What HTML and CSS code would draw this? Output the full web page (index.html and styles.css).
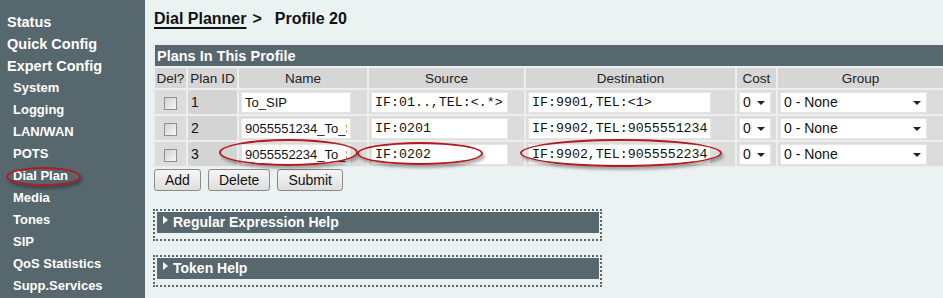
FILE: index.html
```html
<!DOCTYPE HTML>
<html>
<head>
    <title>Dial Planner</title>
    <link rel="stylesheet" href="styles.css">
</head>
<body>
    <div class="page">
        <div class="nav">
            <a class="top" href="#">Status</a>
            <a class="top" href="#">Quick Config</a>
            <a class="top" href="#">Expert Config</a>
            <a class="sub" href="#">System</a>
            <a class="sub" href="#">Logging</a>
            <a class="sub" href="#">LAN/WAN</a>
            <a class="sub" href="#">POTS</a>
            <a class="sub" href="#">Dial Plan</a>
            <a class="sub" href="#">Media</a>
            <a class="sub" href="#">Tones</a>
            <a class="sub" href="#">SIP</a>
            <a class="sub" href="#">QoS Statistics</a>
            <a class="sub" href="#">Supp.Services</a>
        </div>
        <div class="main">
            <h1 class="crumbs"><a href="#">Dial Planner</a><span class="sep">&gt;</span>Profile 20</h1>
            <table class="plans">
                <colgroup>
                    <col class="c-del"><col class="c-id"><col class="c-name"><col class="c-src">
                    <col class="c-dst"><col class="c-cost"><col class="c-group">
                </colgroup>
                <tr><th class="title" colspan="7">Plans In This Profile</th></tr>
                <tr class="head">
                    <td>Del?</td><td>Plan ID</td><td>Name</td><td>Source</td>
                    <td>Destination</td><td>Cost</td><td>Group</td>
                </tr>
                <tr class="row">
                    <td class="del"><input type="checkbox"></td>
                    <td class="id">1</td>
                    <td><input class="text name" type="text" value="To_SIP"></td>
                    <td><input class="text mono src" type="text" value="IF:01..,TEL:&lt;.*&gt;"></td>
                    <td><input class="text mono dst" type="text" value="IF:9901,TEL:&lt;1&gt;"></td>
                    <td><span class="pick cost"><select><option>0</option></select></span></td>
                    <td><span class="pick group"><select><option>0 - None</option></select></span></td>
                </tr>
                <tr class="row">
                    <td class="del"><input type="checkbox"></td>
                    <td class="id">2</td>
                    <td><input class="text name" type="text" value="9055551234_To_SIP"></td>
                    <td><input class="text mono src" type="text" value="IF:0201"></td>
                    <td><input class="text mono dst" type="text" value="IF:9902,TEL:9055551234"></td>
                    <td><span class="pick cost"><select><option>0</option></select></span></td>
                    <td><span class="pick group"><select><option>0 - None</option></select></span></td>
                </tr>
                <tr class="row">
                    <td class="del"><input type="checkbox"></td>
                    <td class="id">3</td>
                    <td><input class="text name" type="text" value="9055552234_To_SIP"></td>
                    <td><input class="text mono src" type="text" value="IF:0202"></td>
                    <td><input class="text mono dst" type="text" value="IF:9902,TEL:9055552234"></td>
                    <td><span class="pick cost"><select><option>0</option></select></span></td>
                    <td><span class="pick group"><select><option>0 - None</option></select></span></td>
                </tr>
            </table>
            <div class="actions">
                <button>Add</button>
                <button>Delete</button>
                <button>Submit</button>
            </div>
            <div class="help">
                <div class="help-bar"><span class="arrow"></span>Regular Expression Help</div>
            </div>
            <div class="help second">
                <div class="help-bar"><span class="arrow"></span>Token Help</div>
            </div>
        </div>
    </div>

    <!-- red marks drawn over the screenshot -->
    <div class="mark mark-nav"></div>
    <div class="mark mark-name"></div>
    <div class="mark mark-src"></div>
    <div class="mark mark-dst"></div>
</body>
</html>
```

FILE: styles.css
```css
body
{
    margin: 0;
    background: #ebf3f2;
    font-family: "Liberation Sans", Arial, sans-serif;
    color: #111;
    overflow: hidden;
    position: relative;
}

div.page
{
    display: flex;
    min-height: 298px;
}

div.nav
{
    width: 145px;
    flex: none;
    box-sizing: border-box;
    padding-top: 11px;
    background: #56676e;
}

div.nav a
{
    display: block;
    color: #fff;
    font-weight: bold;
    text-decoration: none;
    line-height: 22px;
}

div.nav a.top { font-size: 14.5px; padding-left: 7px; }
div.nav a.sub { font-size: 13px; padding-left: 13px; }

div.main
{
    flex: 1;
    padding-left: 8px;
}

h1.crumbs
{
    margin: 9px 0 0 1px;
    font-size: 16px;
    line-height: 20px;
}

h1.crumbs a
{
    color: #111;
    text-decoration: underline;
    text-decoration-thickness: 2px;
    text-underline-offset: 3px;
}

h1.crumbs span.sep
{
    margin: 0 13px 0 6px;
}

table.plans
{
    margin-top: 14px;
    width: 792px;
    table-layout: fixed;
    border-spacing: 2px;
    background: #eeeeee;
    font-size: 13px;
}

col.c-del { width: 31px; }
col.c-id { width: 49px; }
col.c-name { width: 128px; }
col.c-src { width: 155px; }
col.c-dst { width: 209px; }
col.c-cost { width: 39px; }
col.c-group { width: 165px; }

table.plans td, table.plans th
{
    padding: 0 2px;
    box-sizing: border-box;
    white-space: nowrap;
    overflow: hidden;
}

th.title
{
    height: 21px;
    padding-left: 2px;
    background: #56676e;
    color: #fff;
    text-align: left;
    font-size: 14.5px;
}

tr.head td
{
    height: 20px;
    padding: 0;
    background: #d6d6d6;
    color: #222;
    text-align: center;
    font-size: 13.5px;
}

tr.row td
{
    height: 24px;
    background: #dcdcdc;
}

tr.row td.del { text-align: center; }
tr.row td.id { padding-left: 3px; background: #d4d4d4; font-size: 14px; }

input[type=checkbox]
{
    appearance: none;
    display: inline-block;
    vertical-align: middle;
    width: 13px;
    height: 13px;
    margin: 0;
    border: 1px solid #8e8f8f;
    background: linear-gradient(135deg, #d2d2d2, #f7f7f7);
    box-sizing: border-box;
}

input.text
{
    display: block;
    box-sizing: border-box;
    height: 21px;
    margin: 0;
    padding: 0 3px;
    border: 1px solid #e6e6e6;
    background: #fff;
    font-family: "Liberation Sans", Arial, sans-serif;
    font-size: 13px;
    color: #111;
}

input.mono
{
    font-family: "Liberation Mono", "Courier New", monospace;
    font-size: 13.3px;
}

input.name { width: 110px; }
input.src { width: 137px; }
input.dst { width: 183px; }

span.pick
{
    display: block;
    position: relative;
    height: 21px;
    background: #fff;
    border: 1px solid #e6e6e6;
    box-sizing: border-box;
}

span.pick.cost { width: 32px; }
span.pick.group { width: 147px; }

span.pick select
{
    appearance: none;
    width: 100%;
    height: 19px;
    border: none;
    background: transparent;
    padding: 0 0 0 3px;
    font-family: "Liberation Sans", Arial, sans-serif;
    font-size: 14px;
    color: #111;
}

span.pick::after
{
    content: "";
    position: absolute;
    right: 5px;
    top: 8px;
    border-left: 4px solid transparent;
    border-right: 4px solid transparent;
    border-top: 4px solid #222;
}

div.actions
{
    display: flex;
    gap: 7px;
    margin: 1px 0 0 1px;
}

div.actions button
{
    height: 22px;
    padding: 0 10px;
    border: 1px solid #8a8a8a;
    border-radius: 3px;
    background: linear-gradient(#f6f6f6, #dedede);
    font-family: "Liberation Sans", Arial, sans-serif;
    font-size: 14px;
    color: #111;
}

div.help
{
    width: 449px;
    box-sizing: border-box;
    margin-top: 18px;
    padding: 1px 1px 6px 2px;
    border: 2px dotted #5c6468;
}

div.help.second { margin-top: 14px; }

div.help-bar
{
    height: 21px;
    line-height: 21px;
    padding-left: 6px;
    background: #56676e;
    color: #fff;
    font-weight: bold;
    font-size: 14px;
}

span.arrow
{
    display: inline-block;
    vertical-align: top;
    margin: 4px 5px 0 0;
    border-left: 5px solid #fff;
    border-top: 4px solid transparent;
    border-bottom: 4px solid transparent;
}

div.mark
{
    position: absolute;
    border: 2px solid #b51a1e;
    border-radius: 50%;
    box-shadow: 2px 3px 3px rgba(0, 0, 0, .3);
    box-sizing: border-box;
}

div.mark-nav { left: 6px; top: 167px; width: 75px; height: 19px; }
div.mark-name { left: 219px; top: 139px; width: 139px; height: 27px; }
div.mark-src { left: 357px; top: 142px; width: 126px; height: 23px; }
div.mark-dst { left: 520px; top: 139px; width: 202px; height: 28px; }
```
